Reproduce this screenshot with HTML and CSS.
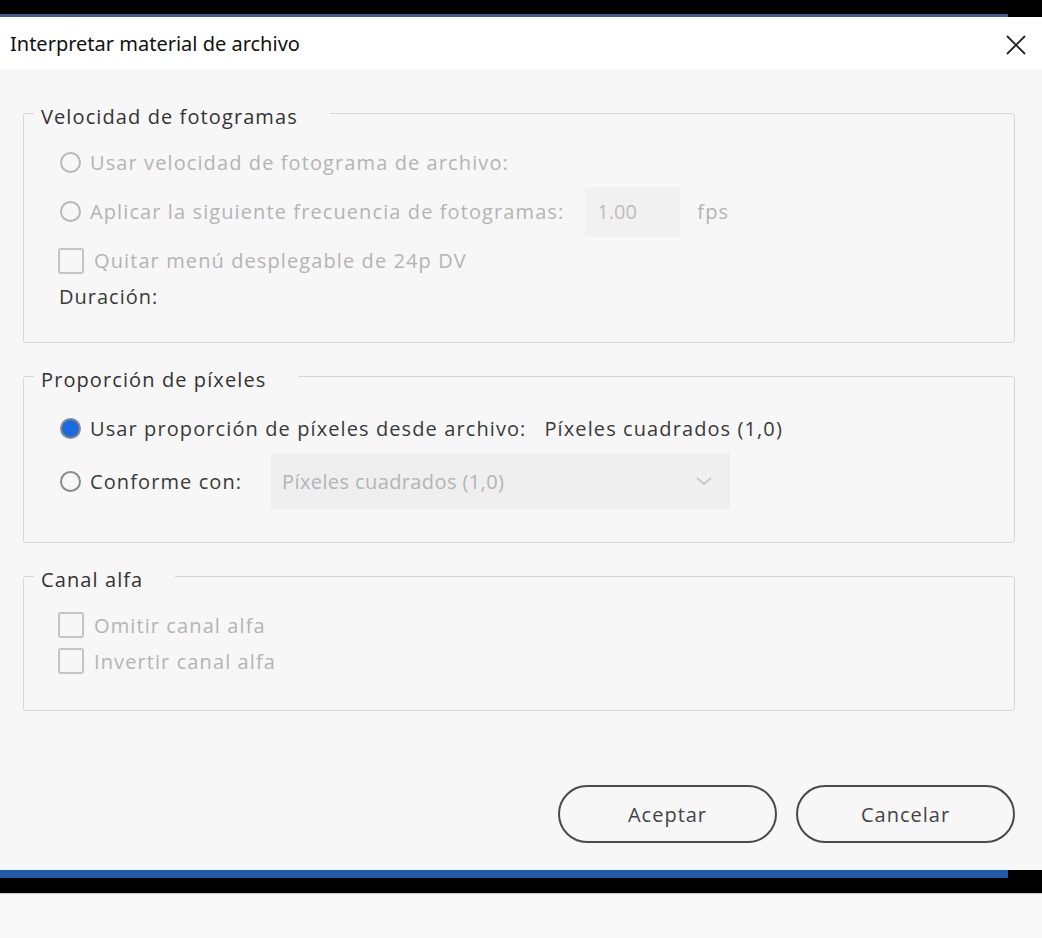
FILE: index.html
```html
<!DOCTYPE html>
<html lang="es">
  <head>
    <meta charset="UTF-8" />
    <meta name="viewport" content="width=device-width, initial-scale=1.0" />
    <title>Interpretar material de archivo</title>
    <link rel="stylesheet" href="styles.css">
  </head>
  <body>
    <div class="frame-top"><div class="accent"></div></div>

    <div class="titlebar">
      <span class="title">Interpretar material de archivo</span>
      <button type="button" class="close" aria-label="Cerrar">
        <svg width="20" height="20" viewBox="0 0 20 20">
          <path d="M1 1 L19 19 M19 1 L1 19" stroke="#222" stroke-width="1.8" fill="none" />
        </svg>
      </button>
    </div>

    <div class="dialog">
      <fieldset class="group group-rate">
        <legend>Velocidad de fotogramas</legend>
        <div class="row disabled">
          <span class="radio"></span>
          <span>Usar velocidad de fotograma de archivo:</span>
        </div>
        <div class="row disabled">
          <span class="radio"></span>
          <span>Aplicar la siguiente frecuencia de fotogramas:</span>
          <span class="num-field">1.00</span>
          <span class="unit">fps</span>
        </div>
        <div class="row disabled">
          <span class="check"></span>
          <span>Quitar menú desplegable de 24p DV</span>
        </div>
        <div class="duration">Duración:</div>
      </fieldset>

      <fieldset class="group group-pixel">
        <legend>Proporción de píxeles</legend>
        <div class="row">
          <span class="radio on"></span>
          <span>Usar proporción de píxeles desde archivo:</span>
          <span class="value">Píxeles cuadrados (1,0)</span>
        </div>
        <div class="row row-select">
          <span class="radio"></span>
          <span class="conform">Conforme con:</span>
          <span class="select">
            <span>Píxeles cuadrados (1,0)</span>
            <svg width="16" height="10" viewBox="0 0 16 10">
              <path d="M1 2 L8 8 L15 2" stroke="#bdbdbd" stroke-width="1.4" fill="none" />
            </svg>
          </span>
        </div>
      </fieldset>

      <fieldset class="group group-alpha">
        <legend>Canal alfa</legend>
        <div class="row short disabled">
          <span class="check"></span>
          <span>Omitir canal alfa</span>
        </div>
        <div class="row short disabled">
          <span class="check"></span>
          <span>Invertir canal alfa</span>
        </div>
      </fieldset>

      <div class="actions">
        <button type="button" class="btn">Aceptar</button>
        <button type="button" class="btn">Cancelar</button>
      </div>
    </div>

    <div class="frame-bottom"><div class="accent"></div></div>
    <div class="below"></div>
  </body>
</html>
```

FILE: styles.css
```css
body {
  margin: 0;
  font-family: "Open Sans", "Noto Sans", sans-serif;
  background-color: #f8f8f8;
  color: #3a3a3a;
}
.frame-top {
  height: 17px;
  background-color: #000;
  display: flex;
  align-items: flex-end;
}
.frame-top .accent {
  width: 1008px;
  height: 3px;
  background-color: #3d5d8c;
}
.titlebar {
  height: 53px;
  background-color: #fff;
  display: flex;
  align-items: center;
  justify-content: space-between;
  padding: 0 16px 0 10px;
}
.title {
  font-family: "Noto Sans", sans-serif;
  font-size: 20px;
  color: #111;
}
.close {
  border: none;
  background: none;
  padding: 0;
  display: flex;
  margin-top: 3px;
}
.dialog {
  height: 800px;
  box-sizing: border-box;
  background-color: #f7f7f7;
  padding: 27px 27px 0 23px;
}
.group {
  margin: 0 0 17px 0;
  padding: 0 0 0 10px;
  border: 1px solid #d6d6d6;
  border-radius: 3px;
  min-width: 0;
}
.group legend {
  padding: 8px 32px 0 7px;
  font-size: 20px;
  letter-spacing: 1.1px;
  line-height: 24px;
  color: #333;
}
.group-rate {
  padding-top: 9px;
  padding-bottom: 33px;
}
.group-pixel {
  padding-top: 10px;
  padding-bottom: 34px;
}
.group-alpha {
  padding-top: 15px;
  padding-bottom: 31px;
}
.row {
  display: flex;
  align-items: center;
  height: 49px;
  padding-left: 24px;
  font-size: 20px;
  letter-spacing: 1.1px;
  color: #3a3a3a;
}
.group-pixel .row {
  height: 52px;
}
.group-pixel .row-select {
  height: 54px;
}
.row.short {
  height: 36px;
}
.row.disabled {
  color: #b4b4b4;
}
.radio {
  width: 17px;
  height: 17px;
  border: 2px solid #b8b8b8;
  border-radius: 50%;
  margin: 0 9px 0 2px;
  flex: none;
}
.row:not(.disabled) .radio {
  border-color: #8a8a8a;
}
.radio.on {
  border-color: #1a6be0;
  background-color: #1a6be0;
}
.check {
  width: 22px;
  height: 22px;
  border: 2px solid #c4c4c4;
  border-radius: 3px;
  margin: 0 10px 0 0;
  flex: none;
}
.num-field {
  margin-left: 21px;
  width: 95px;
  height: 50px;
  box-sizing: border-box;
  padding-left: 12px;
  display: flex;
  align-items: center;
  background-color: #f1f1f1;
  color: #bdbdbd;
  letter-spacing: 0;
}
.unit {
  margin-left: 17px;
}
.value {
  margin-left: 18px;
}
.conform {
  width: 181px;
  flex: none;
}
.select {
  width: 459px;
  height: 56px;
  box-sizing: border-box;
  padding: 0 18px 0 11px;
  display: flex;
  align-items: center;
  justify-content: space-between;
  background-color: #efefef;
  color: #b4b4b4;
  letter-spacing: 0.4px;
}
.duration {
  height: 24px;
  line-height: 24px;
  padding-left: 25px;
  font-size: 20px;
  letter-spacing: 1px;
  color: #3a3a3a;
}
.actions {
  display: flex;
  justify-content: flex-end;
  gap: 19px;
  margin-top: 74px;
}
.btn {
  width: 219px;
  height: 58px;
  border: 2px solid #4a4a4a;
  border-radius: 29px;
  background: none;
  font-family: "Open Sans", "Noto Sans", sans-serif;
  font-size: 20px;
  letter-spacing: 1px;
  color: #444;
  cursor: pointer;
}
.frame-bottom {
  height: 23px;
  background-color: #000;
}
.frame-bottom .accent {
  width: 1008px;
  height: 8px;
  background-color: #1f5aa8;
}
.below {
  height: 45px;
  border-top: 1px solid #c8c8c8;
  background-color: #f8f8f8;
}
```
